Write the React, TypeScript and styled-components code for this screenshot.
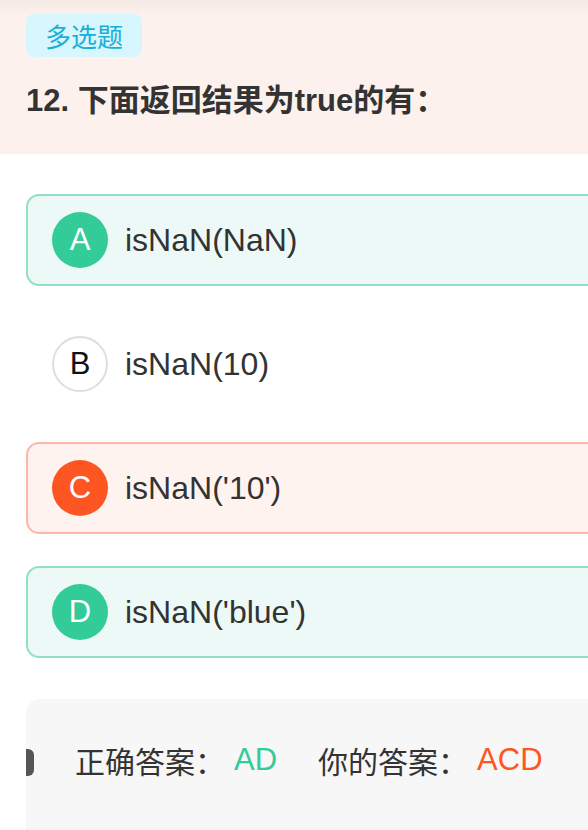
import React from 'react';
import styled, { createGlobalStyle, css } from 'styled-components';

type Status = 'right' | 'wrong' | 'none';

interface IOption {
  key: string;
  text: string;
  status: Status;
}

const options: IOption[] = [
  { key: 'A', text: 'isNaN(NaN)', status: 'right' },
  { key: 'B', text: 'isNaN(10)', status: 'none' },
  { key: 'C', text: "isNaN('10')", status: 'wrong' },
  { key: 'D', text: "isNaN('blue')", status: 'right' }
];

const GREEN = '#33cc99';
const ORANGE = '#fd5622';

const GlobalStyle = createGlobalStyle`
  html, body {
    margin: 0;
    padding: 0;
    background: #fff;
    overflow: hidden;
  }

  body {
    font-family: "Liberation Sans", "Noto Sans CJK SC", sans-serif;
    color: #333;
  }
`;

const Page = styled.div`
  width: 588px;
  height: 830px;
  overflow: hidden;
  background: #fff;
`;

const Header = styled.div`
  background: linear-gradient(to bottom, rgba(0, 0, 0, 0.035), rgba(0, 0, 0, 0) 16px), #fdf1ed;
  padding: 14px 0 33px 26px;
`;

const Tag = styled.span`
  display: inline-flex;
  align-items: center;
  height: 43px;
  padding: 0 19px;
  border-radius: 8px;
  background: #d8f6fd;
  color: #19b0d6;
  font-size: 26px;
  font-family: "Noto Sans CJK SC", sans-serif;
`;

const Title = styled.h2`
  margin: 24px 0 0;
  font-size: 31px;
  line-height: 40px;
  font-weight: bold;
  color: #333;
  white-space: nowrap;
`;

const List = styled.div`
  display: flex;
  flex-direction: column;
  gap: 32px;
  padding: 40px 0 0 26px;
  width: 620px;
`;

const Option = styled.div<{ $status: Status }>`
  display: flex;
  align-items: center;
  gap: 17px;
  height: 92px;
  box-sizing: border-box;
  padding-left: 24px;
  border: 2px solid transparent;
  border-radius: 13px;

  ${({ $status }) => $status === 'right' && css`
    border-color: #8fe0c4;
    background: #edf9f6;
  `}

  ${({ $status }) => $status === 'wrong' && css`
    border-color: #fbb9a5;
    background: #fff3f0;
  `}
`;

const Letter = styled.span<{ $status: Status }>`
  flex: none;
  display: flex;
  align-items: center;
  justify-content: center;
  width: 56px;
  height: 56px;
  box-sizing: border-box;
  border-radius: 50%;
  font-size: 31px;
  color: #fff;
  background: ${({ $status }) => ($status === 'right' ? GREEN : $status === 'wrong' ? ORANGE : '#fff')};
  border: ${({ $status }) => ($status === 'none' ? '2px solid #dedede' : 'none')};

  ${({ $status }) => $status === 'none' && css`
    color: #111;
  `}
`;

const OptionText = styled.span`
  font-size: 32px;
  color: #333;
  white-space: nowrap;
`;

const AnswerBox = styled.div`
  position: relative;
  margin: 41px 0 0 26px;
  height: 200px;
  background: #f7f7f7;
  border-radius: 14px 0 0 0;
  padding: 41px 0 0 49px;
  box-sizing: border-box;
  display: flex;
  align-items: flex-start;

  &::before {
    content: '';
    position: absolute;
    left: 0;
    top: 50px;
    width: 8px;
    height: 27px;
    background: #555;
    border-radius: 0 6px 6px 0;
  }
`;

const AnswerItem = styled.span`
  display: inline-flex;
  align-items: center;
  height: 40px;
  font-size: 30px;
  color: #333;
  white-space: nowrap;
  font-family: "Noto Sans CJK SC", sans-serif;

  & + & {
    margin-left: 41px;
  }
`;

const AnswerValue = styled.span<{ $color: string }>`
  margin-left: 9px;
  font-family: "Liberation Sans", sans-serif;
  font-size: 31px;
  color: ${({ $color }) => $color};
`;

export default function App () {
  return (
    <Page>
      <GlobalStyle />
      <Header>
        <Tag>多选题</Tag>
        <Title>12. 下面返回结果为true的有：</Title>
      </Header>
      <List>
        {options.map((o) => (
          <Option key={o.key} $status={o.status}>
            <Letter $status={o.status}>{o.key}</Letter>
            <OptionText>{o.text}</OptionText>
          </Option>
        ))}
      </List>
      <AnswerBox>
        <AnswerItem>
          正确答案：<AnswerValue $color={GREEN}>AD</AnswerValue>
        </AnswerItem>
        <AnswerItem>
          你的答案：<AnswerValue $color={ORANGE}>ACD</AnswerValue>
        </AnswerItem>
      </AnswerBox>
    </Page>
  );
}
